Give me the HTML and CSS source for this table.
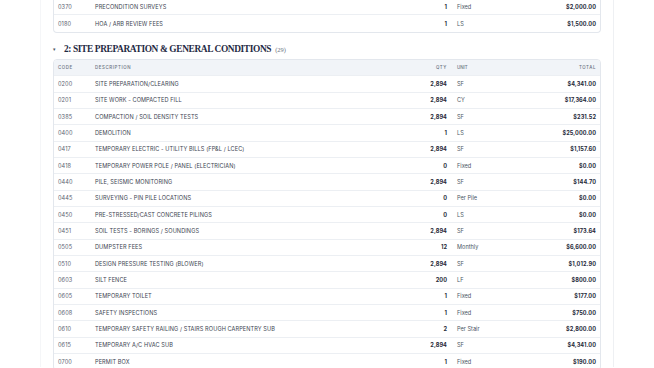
FILE: index.html
```html
<!DOCTYPE html>
<html>
<head>
<meta charset="utf-8">
<link rel="stylesheet" href="styles.css">
</head>
<body>
<div class="page">
  <div class="content">
    <div class="table table-top">
      <div class="row"><span class="code">0370</span><span class="desc">PRECONDITION SURVEYS</span><span class="qty">1</span><span class="unit">Fixed</span><span class="total">$2,000.00</span></div>
      <div class="row last"><span class="code">0180</span><span class="desc">HOA / ARB REVIEW FEES</span><span class="qty">1</span><span class="unit">LS</span><span class="total">$1,500.00</span></div>
    </div>

    <div class="section-head">
      <span class="caret">&#9662;</span>
      <h2 class="section-title">2: SITE PREPARATION &amp; GENERAL CONDITIONS</h2>
      <span class="count">(29)</span>
    </div>

    <div class="table">
      <div class="row head"><span class="code">Code</span><span class="desc">Description</span><span class="qty">Qty</span><span class="unit">Unit</span><span class="total">Total</span></div>
      <div class="row"><span class="code">0200</span><span class="desc">SITE PREPARATION/CLEARING</span><span class="qty">2,894</span><span class="unit">SF</span><span class="total">$4,341.00</span></div>
      <div class="row"><span class="code">0201</span><span class="desc">SITE WORK - COMPACTED FILL</span><span class="qty">2,894</span><span class="unit">CY</span><span class="total">$17,364.00</span></div>
      <div class="row"><span class="code">0385</span><span class="desc">COMPACTION / SOIL DENSITY TESTS</span><span class="qty">2,894</span><span class="unit">SF</span><span class="total">$231.52</span></div>
      <div class="row"><span class="code">0400</span><span class="desc">DEMOLITION</span><span class="qty">1</span><span class="unit">LS</span><span class="total">$25,000.00</span></div>
      <div class="row"><span class="code">0417</span><span class="desc">TEMPORARY ELECTRIC - UTILITY BILLS (FP&amp;L / LCEC)</span><span class="qty">2,894</span><span class="unit">SF</span><span class="total">$1,157.60</span></div>
      <div class="row"><span class="code">0418</span><span class="desc">TEMPORARY POWER POLE / PANEL (ELECTRICIAN)</span><span class="qty">0</span><span class="unit">Fixed</span><span class="total">$0.00</span></div>
      <div class="row"><span class="code">0440</span><span class="desc">PILE, SEISMIC MONITORING</span><span class="qty">2,894</span><span class="unit">SF</span><span class="total">$144.70</span></div>
      <div class="row"><span class="code">0445</span><span class="desc">SURVEYING - PIN PILE LOCATIONS</span><span class="qty">0</span><span class="unit">Per Pile</span><span class="total">$0.00</span></div>
      <div class="row"><span class="code">0450</span><span class="desc">PRE-STRESSED/CAST CONCRETE PILINGS</span><span class="qty">0</span><span class="unit">LS</span><span class="total">$0.00</span></div>
      <div class="row"><span class="code">0451</span><span class="desc">SOIL TESTS - BORINGS / SOUNDINGS</span><span class="qty">2,894</span><span class="unit">SF</span><span class="total">$173.64</span></div>
      <div class="row"><span class="code">0505</span><span class="desc">DUMPSTER FEES</span><span class="qty">12</span><span class="unit">Monthly</span><span class="total">$6,600.00</span></div>
      <div class="row"><span class="code">0510</span><span class="desc">DESIGN PRESSURE TESTING (BLOWER)</span><span class="qty">2,894</span><span class="unit">SF</span><span class="total">$1,012.90</span></div>
      <div class="row"><span class="code">0603</span><span class="desc">SILT FENCE</span><span class="qty">200</span><span class="unit">LF</span><span class="total">$800.00</span></div>
      <div class="row"><span class="code">0605</span><span class="desc">TEMPORARY TOILET</span><span class="qty">1</span><span class="unit">Fixed</span><span class="total">$177.00</span></div>
      <div class="row"><span class="code">0608</span><span class="desc">SAFETY INSPECTIONS</span><span class="qty">1</span><span class="unit">Fixed</span><span class="total">$750.00</span></div>
      <div class="row"><span class="code">0610</span><span class="desc">TEMPORARY SAFETY RAILING / STAIRS ROUGH CARPENTRY SUB</span><span class="qty">2</span><span class="unit">Per Stair</span><span class="total">$2,800.00</span></div>
      <div class="row"><span class="code">0615</span><span class="desc">TEMPORARY A/C HVAC SUB</span><span class="qty">2,894</span><span class="unit">SF</span><span class="total">$4,341.00</span></div>
      <div class="row"><span class="code">0700</span><span class="desc">PERMIT BOX</span><span class="qty">1</span><span class="unit">Fixed</span><span class="total">$190.00</span></div>
    </div>
  </div>
</div>
</body>
</html>
```

FILE: styles.css
```css
* { box-sizing: border-box; }
html, body { margin: 0; padding: 0; background: #ffffff; overflow: hidden; }
body { width: 654px; height: 368px; font-family: Inter, "Noto Sans", sans-serif; }

.page {
  margin-left: 40px;
  width: 574px;
  height: 368px;
  border-left: 1px solid #f5f6f8;
  border-right: 1px solid #eef0f3;
  background: #fff;
}

.content {
  padding: 0 12px 0 12px;
}

.table {
  width: 548px;
  border: 1px solid #e3e7ed;
  border-radius: 4px;
  overflow: hidden;
  background: #fff;
}

.table-top {
  margin-top: -1px;
  border-top: none;
  border-top-left-radius: 0;
  border-top-right-radius: 0;
}

.row {
  display: grid;
  grid-template-columns: 41px 1fr 34px 53px 100px;
  align-items: center;
  height: 16.35px;
  border-bottom: 1px solid #eceff3;
  font-size: 5.6px;
  color: #3b4250;
  letter-spacing: 0.08px;
}
.row.last { border-bottom: none; }

.row > span { white-space: nowrap; }
.code { padding-left: 4px; color: #5b6270; }
.desc { color: #3b4250; }
.qty { text-align: right; font-weight: 700; color: #1f2937; }
.unit { padding-left: 10px; color: #4b5563; letter-spacing: 0; }
.total { text-align: right; padding-right: 4px; font-weight: 700; color: #1f2a3a; }

.row.head {
  height: 16.6px;
  background: #f1f4f8;
  font-size: 4.4px;
  text-transform: uppercase;
  letter-spacing: 0.6px;
  color: #6b7280;
}
.row.head span { font-weight: 500; color: #6b7280; }

.section-head {
  display: flex;
  align-items: center;
  height: 26px;
  padding-top: 7px;
}
.caret {
  font-size: 5px;
  color: #4b5563;
  width: 11px;
  padding-left: 0;
}
.section-title {
  margin: 0;
  font-family: "Liberation Serif", "DejaVu Serif", serif;
  font-weight: 700;
  font-size: 9.4px;
  letter-spacing: -0.38px;
  color: #1f2a44;
}
.count {
  margin-left: 4px;
  font-family: "Liberation Serif", serif;
  font-size: 6.4px;
  color: #6b7280;
}
```
